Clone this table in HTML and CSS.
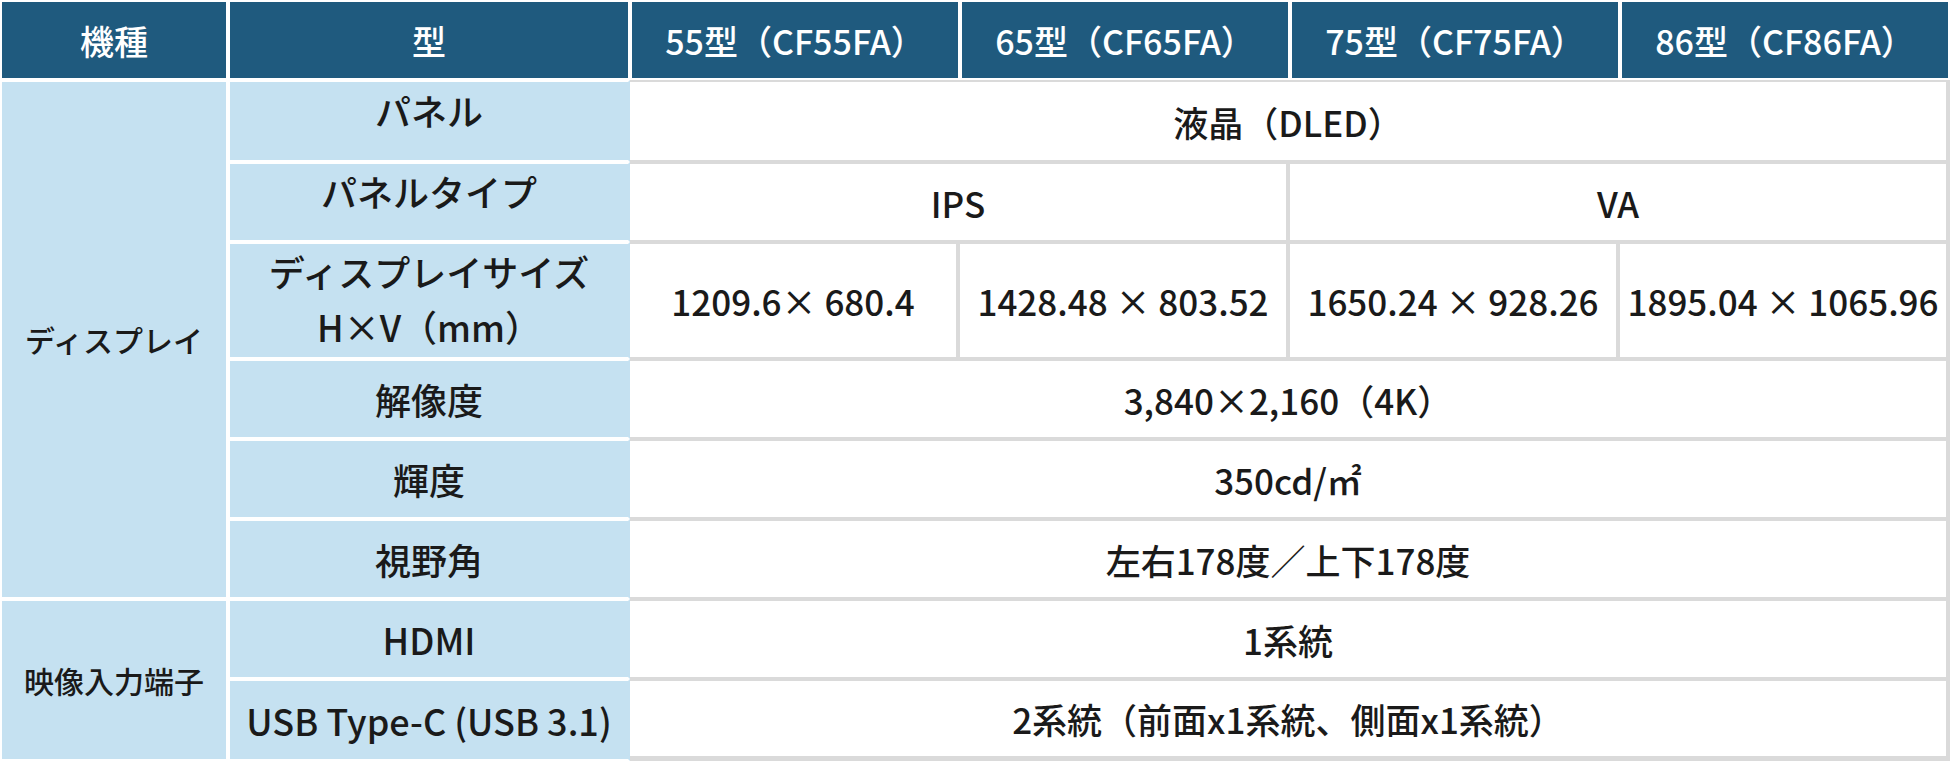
FILE: index.html
```html
<!DOCTYPE html>
<html lang="ja">
<head>
<meta charset="utf-8">
<title>仕様表</title>
<link rel="stylesheet" href="styles.css">
</head>
<body>
<div class="spec">
  <div class="cell head">機種</div>
  <div class="cell head">型</div>
  <div class="cell head">55型（CF55FA）</div>
  <div class="cell head">65型（CF65FA）</div>
  <div class="cell head">75型（CF75FA）</div>
  <div class="cell head">86型（CF86FA）</div>

  <div class="cell group group-display">ディスプレイ</div>
  <div class="cell label raised">パネル</div>
  <div class="cell data span4">液晶（DLED）</div>

  <div class="cell label raised">パネルタイプ</div>
  <div class="cell data span2">IPS</div>
  <div class="cell data span2">VA</div>

  <div class="cell label tall"><span>ディスプレイサイズ</span><span>H×V（mm）</span></div>
  <div class="cell data">1209.6× 680.4</div>
  <div class="cell data">1428.48 × 803.52</div>
  <div class="cell data">1650.24 × 928.26</div>
  <div class="cell data">1895.04 × 1065.96</div>

  <div class="cell label">解像度</div>
  <div class="cell data span4">3,840×2,160（4K）</div>

  <div class="cell label">輝度</div>
  <div class="cell data span4">350cd/㎡</div>

  <div class="cell label">視野角</div>
  <div class="cell data span4">左右178度／上下178度</div>

  <div class="cell group group-input">映像入力端子</div>
  <div class="cell label">HDMI</div>
  <div class="cell data span4">1系統</div>

  <div class="cell label">USB Type-C (USB 3.1)</div>
  <div class="cell data span4 last">2系統（前面x1系統、側面x1系統）</div>
</div>
</body>
</html>
```

FILE: styles.css
```css
html, body {
  margin: 0;
  padding: 0;
  background: #ffffff;
}

.spec {
  display: grid;
  width: 1950px;
  grid-template-columns: 228px 402px repeat(4, 1fr);
  grid-template-rows: 80px 82px 80px 117px 80px 80px 80px 80px 82px;
  font-family: "Noto Sans CJK JP", "Noto Sans", sans-serif;
  font-size: 35px;
  font-weight: 500;
  color: #1a1a1a;
}

.cell {
  display: flex;
  align-items: center;
  justify-content: center;
  text-align: center;
  box-sizing: border-box;
  white-space: nowrap;
  line-height: 55px;
}

.head {
  background: #1f5a7e;
  color: #ffffff;
  border: 2px solid #ffffff;
  font-size: 34px;
  font-weight: 500;
}

.group {
  background: #c5e1f1;
  border: 2px solid #ffffff;
  font-weight: 500;
  font-size: 30px;
}

.group-display {
  grid-row: 2 / 8;
  grid-column: 1;
}

.group-input {
  grid-row: 8 / 10;
  grid-column: 1;
}

.label {
  background: #c5e1f1;
  border: 2px solid #ffffff;
  border-right-color: #c5e1f1;
  grid-column: 2;
  font-size: 36px;
  font-weight: 500;
}

.label.raised {
  padding-bottom: 22px;
}

.label.tall {
  flex-direction: column;
  padding-bottom: 4px;
}

.data {
  background: #ffffff;
  border-top: 2px solid #dadada;
  border-bottom: 2px solid #dadada;
  border-right: 4px solid #dadada;
}

.span4 {
  grid-column: 3 / 7;
}

.span2 {
  grid-column: span 2;
}

.last {
  border-bottom-width: 5px;
}
```
